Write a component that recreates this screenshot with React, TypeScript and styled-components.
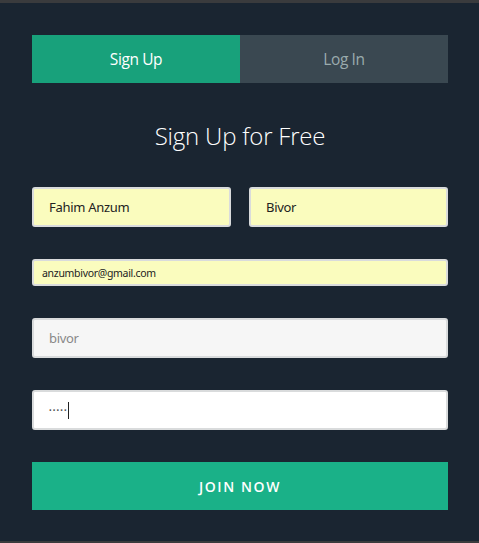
import React from "react";
import styled, { createGlobalStyle } from "styled-components";

const Global = createGlobalStyle`
  html, body {
    margin: 0;
    padding: 0;
    overflow: hidden;
    background: #3a3b3d;
  }
  * { box-sizing: border-box; }
`;

const Panel = styled.div`
  margin-top: 3px;
  width: 480px;
  height: 538px;
  background: #1a2531;
  padding: 32px 32px 0 32px;
  font-family: "Open Sans", "Noto Sans", sans-serif;
`;

const Tabs = styled.div`
  display: grid;
  grid-template-columns: 1fr 1fr;
  height: 48px;
`;

const Tab = styled.div<{ $active?: boolean }>`
  display: flex;
  align-items: center;
  justify-content: center;
  background: ${(p) => (p.$active ? "#18a17b" : "#3a4851")};
  color: ${(p) => (p.$active ? "#ffffff" : "#9aabad")};
  font-size: 15.5px;
  font-weight: 400;
  letter-spacing: -0.4px;
`;

const Title = styled.h1`
  margin: 0;
  height: 104px;
  display: flex;
  align-items: center;
  justify-content: center;
  color: #ffffff;
  font-size: 24px;
  font-weight: 300;
  letter-spacing: -0.2px;
`;

const Form = styled.div`
  display: flex;
  flex-direction: column;
  gap: 32px;
`;

const Row = styled.div`
  display: grid;
  grid-template-columns: 199px 199px;
  justify-content: space-between;
`;

const Field = styled.div<{ $bg: string; $h: number; $pad: number; $size: number; $color: string }>`
  height: ${(p) => p.$h}px;
  display: flex;
  align-items: center;
  padding-left: ${(p) => p.$pad}px;
  background: ${(p) => p.$bg};
  border: 2px solid #d9dbdc;
  border-radius: 3px;
  color: ${(p) => p.$color};
  font-family: "Noto Sans", "DejaVu Sans", sans-serif;
  font-size: ${(p) => p.$size}px;
  letter-spacing: -0.3px;
`;

const Dots = styled.span`
  font-size: 7px;
  letter-spacing: 1.1px;
  color: #555;
`;

const Caret = styled.span`
  display: inline-block;
  width: 1px;
  height: 17px;
  background: #222;
`;

const Button = styled.div`
  height: 48px;
  display: flex;
  align-items: center;
  justify-content: center;
  background: #1ab188;
  color: #ffffff;
  font-size: 14px;
  font-weight: 600;
  letter-spacing: 1.6px;
`;

export default function App() {
  return (
    <>
      <Global />
      <Panel>
        <Tabs>
          <Tab $active>Sign Up</Tab>
          <Tab>Log In</Tab>
        </Tabs>
        <Title>Sign Up for Free</Title>
        <Form>
          <Row>
            <Field $bg="#fafcbe" $h={40} $pad={15} $size={13} $color="#222">Fahim Anzum</Field>
            <Field $bg="#fafcbe" $h={40} $pad={15} $size={13} $color="#222">Bivor</Field>
          </Row>
          <Field $bg="#fafcbe" $h={27} $pad={8} $size={10.5} $color="#222">anzumbivor@gmail.com</Field>
          <Field $bg="#f6f6f6" $h={40} $pad={15} $size={13} $color="#888">bivor</Field>
          <Field $bg="#ffffff" $h={40} $pad={15} $size={13} $color="#333">
            <Dots>•••••</Dots>
            <Caret />
          </Field>
          <Button>JOIN NOW</Button>
        </Form>
      </Panel>
    </>
  );
}
